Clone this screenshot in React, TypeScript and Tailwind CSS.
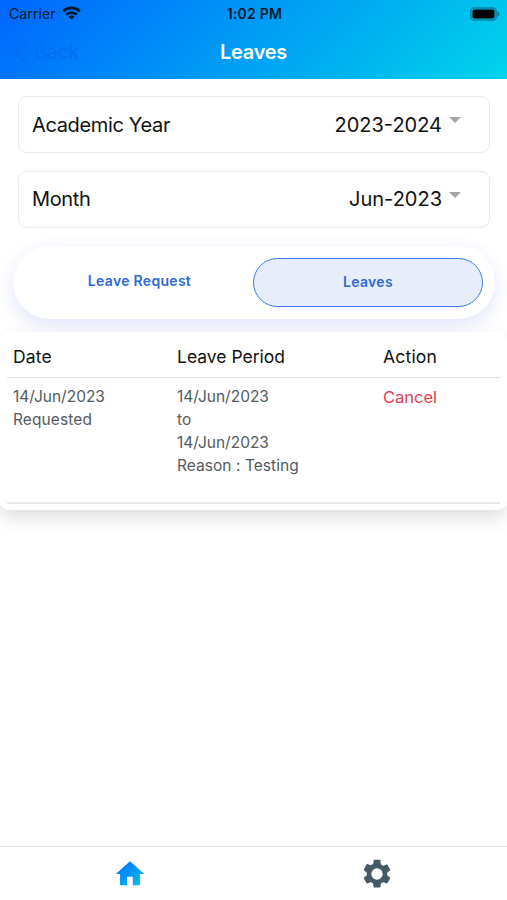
import React, { useState } from 'react';

type Tab = 'request' | 'leaves';

interface Leave {
  id: number;
  date: string;
  status: string;
  from: string;
  to: string;
  reason: string;
}

const leaves: Leave[] = [
  { id: 1, date: '14/Jun/2023', status: 'Requested', from: '14/Jun/2023', to: '14/Jun/2023', reason: 'Testing' },
];

const StatusBar: React.FC = () => (
  <div className="flex items-center justify-between h-7 pl-[9px] pr-[7px] text-[14px] leading-7 text-[#06182c]">
    <div className="flex flex-1 items-center gap-[6px]">
      <span className="tracking-[0.1px]">Carrier</span>
      <svg width="19" height="14" viewBox="0 0 19 14" className="-mt-[2px]" fill="none" stroke="#06182c" strokeWidth="2.8">
        <path d="M1.2 5.2a12 12 0 0 1 16.6 0" />
        <path d="M4.1 8.7a7.8 7.8 0 0 1 10.8 0" />
        <path d="M9.5 13.8 6.6 10.8a4.4 4.4 0 0 1 5.8 0z" fill="#06182c" stroke="none" />
      </svg>
    </div>
    <span className="font-semibold tracking-[0.25px]">1:02 PM</span>
    <div className="flex flex-1 justify-end">
      <svg width="30" height="14" viewBox="0 0 30 14" className="-mt-px">
        <rect x="0.9" y="0.9" width="25.2" height="12.2" rx="3.4" fill="none" stroke="#06303c" strokeOpacity="0.45" strokeWidth="1.5" />
        <rect x="2.5" y="2.5" width="22" height="9" rx="1.8" fill="#000" />
        <path d="M27.4 4.4c2.6.8 2.6 4.4 0 5.2z" fill="#06303c" fillOpacity="0.5" />
      </svg>
    </div>
  </div>
);

const Header: React.FC = () => (
  <header className="h-[79px] shrink-0 bg-[linear-gradient(135deg,#0066ff_0%,#00d4ea_100%)]">
    <StatusBar />
    <div className="flex items-center h-12 px-[14px]">
      <button className="flex flex-1 items-center gap-[7px] text-[20px] tracking-[-0.5px] text-[#006ff2]">
        <svg width="13" height="23" viewBox="0 0 13 23" fill="none" stroke="currentColor" strokeWidth="2.8">
          <path d="M11.5 1.5 2 11.5l9.5 10" />
        </svg>
        Back
      </button>
      <h1 className="text-[20px] font-semibold tracking-[-0.25px] text-white">Leaves</h1>
      <div className="flex-1" />
    </div>
  </header>
);

const SelectField: React.FC<{ label: string; value: string }> = ({ label, value }) => (
  <button className="flex items-center justify-between w-full h-[57px] pl-[13px] pr-[28px] rounded-[9px] border border-[#e8e8e8] bg-white text-[20px] text-[#111]">
    <span className="tracking-[-0.35px]">{label}</span>
    <span className="flex items-center gap-[7px]">
      {value}
      <svg width="12" height="6" viewBox="0 0 12 6" className="-mt-[9px]">
        <path d="M0 0h12L6 6z" fill="#a6a6a6" />
      </svg>
    </span>
  </button>
);

const App: React.FC = () => {
  const [tab, setTab] = useState<Tab>('leaves');
  const activeTab = 'border-[#3b7ded] bg-[#e7edfa]';

  return (
    <div className="flex flex-col w-full h-screen overflow-hidden bg-white font-[Inter,sans-serif]">
      <Header />

      <main className="flex-1">
        <div className="flex flex-col gap-[17.5px] pt-[17px] pl-[18px] pr-[17px]">
          <SelectField label="Academic Year" value="2023-2024" />
          <SelectField label="Month" value="Jun-2023" />
        </div>

        <div className="flex items-center h-[73px] mt-[18.5px] ml-[13px] mr-[12px] px-[12px] rounded-full bg-white shadow-[0_6px_18px_rgba(55,90,225,0.16)] text-[14px] font-semibold tracking-[0.3px] text-[#3069d6]">
          <button onClick={() => setTab('request')} className={`flex-1 h-[49px] pl-px pb-[4px] rounded-full border-[1.5px] ${tab === 'request' ? activeTab : 'border-transparent'}`}>Leave Request</button>
          <button onClick={() => setTab('leaves')} className={`w-[230px] h-[49px] pb-[2px] rounded-full border-[1.5px] ${tab === 'leaves' ? activeTab : 'border-transparent'}`}>Leaves</button>
        </div>

        <section className="relative h-[178px] mt-[13px] px-[7px] rounded-[9px] bg-white shadow-[0_8px_18px_rgba(0,0,0,0.13)]">
          <div className="grid grid-cols-[164px_206px_1fr] h-[46px] pl-[6px] pt-[12px] border-b border-[#dedede] text-[17.5px] leading-[26px] text-[#111]">
            <span className="tracking-[0.2px]">Date</span>
            <span>Leave Period</span>
            <span className="tracking-[0.2px]">Action</span>
          </div>
          {leaves.map((leave) => (
            <div key={leave.id} className="grid grid-cols-[164px_206px_1fr] h-[126px] pl-[6px] pt-[6.5px] border-b-2 border-[#e9e9e9] text-[15.5px] leading-[23.2px] text-[#535b60]">
              <div>
                <p>{leave.date}</p>
                <p className="tracking-[0.1px]">{leave.status}</p>
              </div>
              <div>
                <p>{leave.from}</p>
                <p>to</p>
                <p>{leave.to}</p>
                <p className="tracking-[0.05px]">Reason : {leave.reason}</p>
              </div>
              <button className="self-start justify-self-start text-[16.5px] leading-6 text-[#dc3f50]">Cancel</button>
            </div>
          ))}
        </section>
      </main>

      <nav className="flex h-[54px] shrink-0 px-[6px] border-t border-[#e4e4e4] bg-white">
        <button className="flex flex-1 items-center justify-center">
          <svg width="34" height="34" viewBox="0 0 24 24">
            <defs>
              <linearGradient id="home" x1="0" y1="0" x2="1" y2="1">
                <stop offset="0" stopColor="#0066ff" />
                <stop offset="1" stopColor="#00c8f2" />
              </linearGradient>
            </defs>
            <path fill="url(#home)" d="M10 20v-6h4v6h5v-8h3L12 3 2 12h3v8z" />
          </svg>
        </button>
        <button className="flex flex-1 items-center justify-center">
          <svg width="34" height="34" viewBox="0 0 24 24" fill="#455a64">
            <path d="M19.14 12.94c.04-.3.06-.61.06-.94s-.02-.64-.07-.94l2.03-1.58a.49.49 0 0 0 .12-.61l-1.92-3.32a.49.49 0 0 0-.59-.22l-2.39.96c-.5-.38-1.03-.7-1.62-.94l-.36-2.54A.48.48 0 0 0 13.92 2h-3.84c-.24 0-.43.17-.47.41l-.36 2.54c-.59.24-1.13.57-1.62.94l-2.39-.96a.49.49 0 0 0-.59.22L2.74 8.87c-.12.21-.08.47.12.61l2.03 1.58c-.05.3-.09.63-.09.94s.02.64.07.94l-2.03 1.58a.49.49 0 0 0-.12.61l1.92 3.32c.12.22.37.29.59.22l2.39-.96c.5.38 1.03.7 1.62.94l.36 2.54c.05.24.24.41.48.41h3.84c.24 0 .44-.17.47-.41l.36-2.54c.59-.24 1.13-.56 1.62-.94l2.39.96c.22.08.47 0 .59-.22l1.92-3.32a.49.49 0 0 0-.12-.61zM12 16A4 4 0 1 1 12 8a4 4 0 0 1 0 8z" />
          </svg>
        </button>
      </nav>
    </div>
  );
};

export default App;
